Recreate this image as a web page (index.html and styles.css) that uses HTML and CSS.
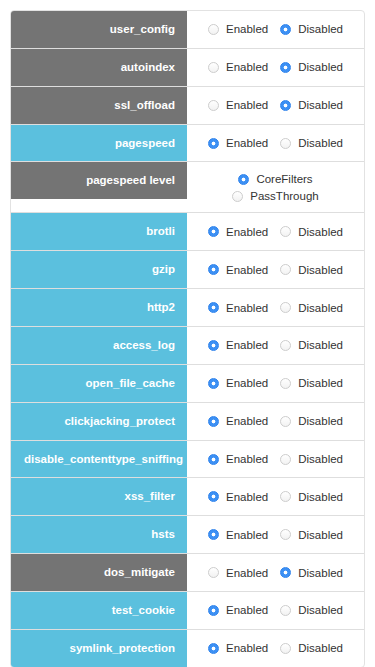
FILE: index.html
```html
<!DOCTYPE html>
<html lang="en">
<head>
    <meta charset="UTF-8">
    <meta name="viewport" content="width=device-width, initial-scale=1.0">
    <title>Settings</title>
    <link rel="stylesheet" href="styles.css">
</head>
<body>
    <div class="settings">
        <div class="row">
            <div class="name off">user_config</div>
            <div class="value">
                <label><input type="radio" name="user_config"> Enabled</label>
                <label><input type="radio" name="user_config" checked> Disabled</label>
            </div>
        </div>
        <div class="row">
            <div class="name off">autoindex</div>
            <div class="value">
                <label><input type="radio" name="autoindex"> Enabled</label>
                <label><input type="radio" name="autoindex" checked> Disabled</label>
            </div>
        </div>
        <div class="row">
            <div class="name off">ssl_offload</div>
            <div class="value">
                <label><input type="radio" name="ssl_offload"> Enabled</label>
                <label><input type="radio" name="ssl_offload" checked> Disabled</label>
            </div>
        </div>
        <div class="row">
            <div class="name on">pagespeed</div>
            <div class="value">
                <label><input type="radio" name="pagespeed" checked> Enabled</label>
                <label><input type="radio" name="pagespeed"> Disabled</label>
            </div>
        </div>
        <div class="row">
            <div class="name off">pagespeed level</div>
            <div class="value stacked">
                <label><input type="radio" name="pagespeed_level" checked> CoreFilters</label>
                <label><input type="radio" name="pagespeed_level"> PassThrough</label>
            </div>
        </div>
        <div class="row">
            <div class="name on">brotli</div>
            <div class="value">
                <label><input type="radio" name="brotli" checked> Enabled</label>
                <label><input type="radio" name="brotli"> Disabled</label>
            </div>
        </div>
        <div class="row">
            <div class="name on">gzip</div>
            <div class="value">
                <label><input type="radio" name="gzip" checked> Enabled</label>
                <label><input type="radio" name="gzip"> Disabled</label>
            </div>
        </div>
        <div class="row">
            <div class="name on">http2</div>
            <div class="value">
                <label><input type="radio" name="http2" checked> Enabled</label>
                <label><input type="radio" name="http2"> Disabled</label>
            </div>
        </div>
        <div class="row">
            <div class="name on">access_log</div>
            <div class="value">
                <label><input type="radio" name="access_log" checked> Enabled</label>
                <label><input type="radio" name="access_log"> Disabled</label>
            </div>
        </div>
        <div class="row">
            <div class="name on">open_file_cache</div>
            <div class="value">
                <label><input type="radio" name="open_file_cache" checked> Enabled</label>
                <label><input type="radio" name="open_file_cache"> Disabled</label>
            </div>
        </div>
        <div class="row">
            <div class="name on">clickjacking_protect</div>
            <div class="value">
                <label><input type="radio" name="clickjacking_protect" checked> Enabled</label>
                <label><input type="radio" name="clickjacking_protect"> Disabled</label>
            </div>
        </div>
        <div class="row">
            <div class="name on">disable_contenttype_sniffing</div>
            <div class="value">
                <label><input type="radio" name="disable_contenttype_sniffing" checked> Enabled</label>
                <label><input type="radio" name="disable_contenttype_sniffing"> Disabled</label>
            </div>
        </div>
        <div class="row">
            <div class="name on">xss_filter</div>
            <div class="value">
                <label><input type="radio" name="xss_filter" checked> Enabled</label>
                <label><input type="radio" name="xss_filter"> Disabled</label>
            </div>
        </div>
        <div class="row">
            <div class="name on">hsts</div>
            <div class="value">
                <label><input type="radio" name="hsts" checked> Enabled</label>
                <label><input type="radio" name="hsts"> Disabled</label>
            </div>
        </div>
        <div class="row">
            <div class="name off">dos_mitigate</div>
            <div class="value">
                <label><input type="radio" name="dos_mitigate"> Enabled</label>
                <label><input type="radio" name="dos_mitigate" checked> Disabled</label>
            </div>
        </div>
        <div class="row">
            <div class="name on">test_cookie</div>
            <div class="value">
                <label><input type="radio" name="test_cookie" checked> Enabled</label>
                <label><input type="radio" name="test_cookie"> Disabled</label>
            </div>
        </div>
        <div class="row">
            <div class="name on">symlink_protection</div>
            <div class="value">
                <label><input type="radio" name="symlink_protection" checked> Enabled</label>
                <label><input type="radio" name="symlink_protection"> Disabled</label>
            </div>
        </div>
    </div>
</body>
</html>
```

FILE: styles.css
```css
body {
    font-family: "Liberation Sans", Arial, sans-serif;
    font-size: 11.5px;
    color: #333;
    margin: 0;
    padding: 10px 10px 0 10px;
    background-color: #fff;
}
.settings {
    border: 1px solid #e2e2e2;
    border-radius: 4px;
    overflow: hidden;
}
.row {
    display: grid;
    grid-template-columns: 176px 1fr;
    border-top: 1px solid #dedede;
}
.row:first-child {
    border-top: 0;
}
.name {
    height: 36.86px;
    line-height: 36.86px;
    padding: 0 12px 0 13px;
    text-align: right;
    white-space: nowrap;
    color: #fff;
    font-weight: bold;
}
.name.off {
    background-color: #747474;
}
.name.on {
    background-color: #5bc0de;
}
.value {
    display: flex;
    align-items: center;
    justify-content: center;
    gap: 12px;
    height: 36.86px;
}
.value.stacked {
    flex-direction: column;
    gap: 0;
    height: auto;
    padding: 9px 0 7px;
    line-height: 17px;
}
.value label {
    display: flex;
    align-items: center;
    gap: 7px;
    white-space: nowrap;
}
.value input {
    appearance: none;
    -webkit-appearance: none;
    width: 11px;
    height: 11px;
    margin: 0;
    border: 1px solid #cdcdcd;
    border-radius: 50%;
    background: linear-gradient(#fff, #f2f2f2);
}
.value input:checked {
    border-color: #2f83ec;
    background: radial-gradient(circle, #fff 0 1.6px, #3c90f4 2.2px);
}
```
